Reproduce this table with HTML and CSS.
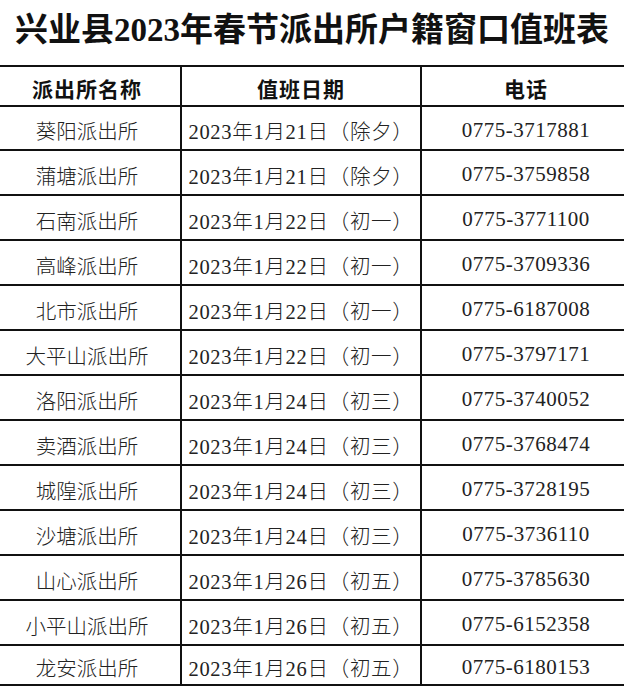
FILE: index.html
```html
<!DOCTYPE html>
<html lang="zh-CN">
<head>
<meta charset="utf-8">
<title>兴业县2023年春节派出所户籍窗口值班表</title>
<link rel="stylesheet" href="styles.css">
</head>
<body>
<h1 class="title">兴业县2023年春节派出所户籍窗口值班表</h1>
<div class="table">
  <div class="row head">
    <div class="cell">派出所名称</div>
    <div class="cell">值班日期</div>
    <div class="cell">电话</div>
  </div>
  <div class="row first">
    <div class="cell">葵阳派出所</div>
    <div class="cell date">2023年1月21日（除夕）</div>
    <div class="cell phone">0775-3717881</div>
  </div>
  <div class="row">
    <div class="cell">蒲塘派出所</div>
    <div class="cell date">2023年1月21日（除夕）</div>
    <div class="cell phone">0775-3759858</div>
  </div>
  <div class="row">
    <div class="cell">石南派出所</div>
    <div class="cell date">2023年1月22日（初一）</div>
    <div class="cell phone">0775-3771100</div>
  </div>
  <div class="row">
    <div class="cell">高峰派出所</div>
    <div class="cell date">2023年1月22日（初一）</div>
    <div class="cell phone">0775-3709336</div>
  </div>
  <div class="row">
    <div class="cell">北市派出所</div>
    <div class="cell date">2023年1月22日（初一）</div>
    <div class="cell phone">0775-6187008</div>
  </div>
  <div class="row">
    <div class="cell">大平山派出所</div>
    <div class="cell date">2023年1月22日（初一）</div>
    <div class="cell phone">0775-3797171</div>
  </div>
  <div class="row">
    <div class="cell">洛阳派出所</div>
    <div class="cell date">2023年1月24日（初三）</div>
    <div class="cell phone">0775-3740052</div>
  </div>
  <div class="row">
    <div class="cell">卖酒派出所</div>
    <div class="cell date">2023年1月24日（初三）</div>
    <div class="cell phone">0775-3768474</div>
  </div>
  <div class="row">
    <div class="cell">城隍派出所</div>
    <div class="cell date">2023年1月24日（初三）</div>
    <div class="cell phone">0775-3728195</div>
  </div>
  <div class="row">
    <div class="cell">沙塘派出所</div>
    <div class="cell date">2023年1月24日（初三）</div>
    <div class="cell phone">0775-3736110</div>
  </div>
  <div class="row">
    <div class="cell">山心派出所</div>
    <div class="cell date">2023年1月26日（初五）</div>
    <div class="cell phone">0775-3785630</div>
  </div>
  <div class="row">
    <div class="cell">小平山派出所</div>
    <div class="cell date">2023年1月26日（初五）</div>
    <div class="cell phone">0775-6152358</div>
  </div>
  <div class="row last">
    <div class="cell">龙安派出所</div>
    <div class="cell date">2023年1月26日（初五）</div>
    <div class="cell phone">0775-6180153</div>
  </div>
</div>
</body>
</html>
```
FILE: styles.css
```css
html, body {
  margin: 0;
  padding: 0;
  background: #ffffff;
}

body {
  width: 624px;
  height: 691px;
  overflow: hidden;
  color: #1a1a1a;
  font-family: "Liberation Serif", "Noto Sans CJK SC", serif;
}

.title {
  margin: 0;
  height: 65px;
  line-height: 60px;
  text-align: center;
  font-size: 33px;
  font-weight: 700;
  color: #111111;
  white-space: nowrap;
}

.table {
  margin-left: -6px;
  width: 636px;
  border-top: 2px solid #111111;
}

.row {
  display: grid;
  grid-template-columns: 186px 240px 210px;
  height: 45px;
  box-sizing: border-box;
  border-bottom: 2px solid #111111;
}

.row.head {
  height: 40px;
}

.row.first {
  height: 44px;
}

.row.last {
  height: 40px;
}

.cell {
  display: flex;
  align-items: center;
  justify-content: center;
  padding-top: 4px;
  box-sizing: border-box;
  font-size: 20.5px;
  font-weight: 300;
  white-space: nowrap;
  color: #222222;
}

.cell + .cell {
  border-left: 2px solid #111111;
}

.head .cell {
  font-size: 21px;
  font-weight: 700;
  letter-spacing: 1px;
  color: #111111;
}

.date {
  letter-spacing: 0.7px;
}

.phone {
  font-size: 21px;
  letter-spacing: 0.5px;
}
```
